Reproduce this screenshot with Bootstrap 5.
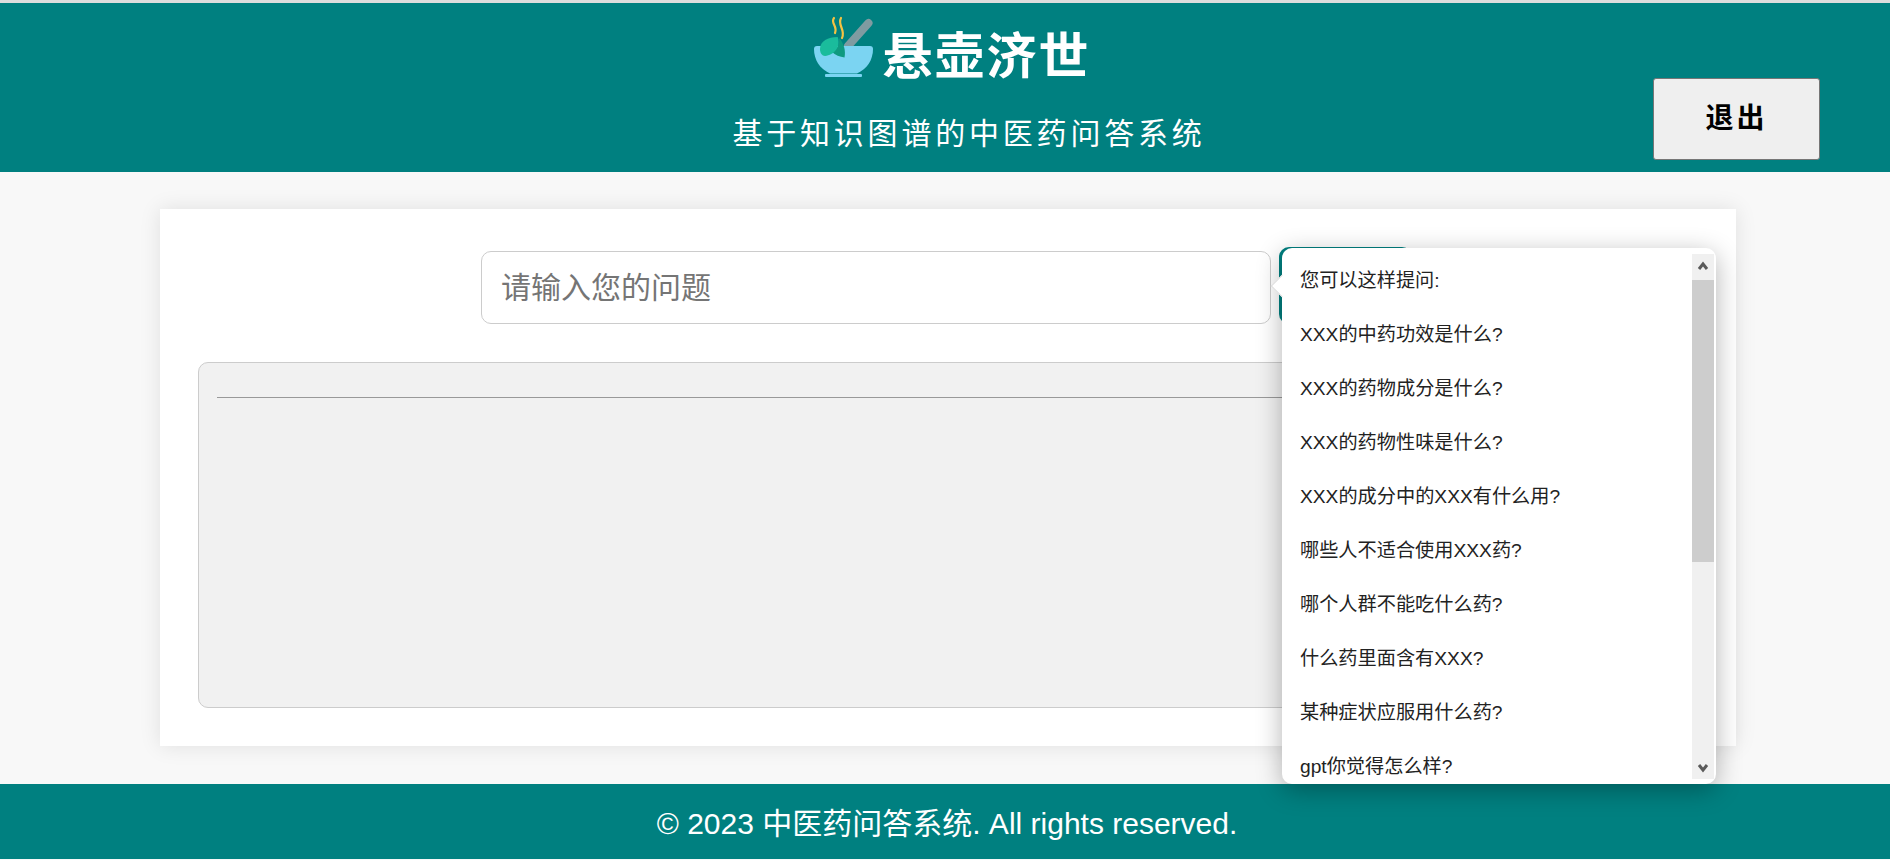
<!DOCTYPE html>
<html lang="zh">
<head>
<meta charset="utf-8">
<title>悬壶济世</title>
<link href="https://cdn.jsdelivr.net/npm/bootstrap@5.3.0/dist/css/bootstrap.min.css" rel="stylesheet">
<style>
html,body{height:860px;overflow:hidden}
body{background:#f8f8f8;font-family:"Liberation Sans","Noto Sans CJK SC",sans-serif;color:#222;display:flex;flex-direction:column}
.top-strip{height:3px;background:#ddd;flex:none}
.site-head{height:169px;background:#008080;color:#fff;position:relative;flex:none}
.brand-line{height:88px;padding-top:13px;padding-left:14px}
.brand-name{font-size:50px;font-weight:700;line-height:58px;letter-spacing:2px;margin:12px 0 0 9px}
.brand-sub{font-size:30px;line-height:40px;letter-spacing:3.8px;margin-top:23px;padding-left:48px}
.logout-btn{position:absolute;left:1653px;top:75px;width:167px;height:82px;background:#efefef;border:1px solid #767676;border-radius:3px;color:#000;font-size:28px;font-weight:700;letter-spacing:3px;padding:0}
.main-zone{flex:1;position:relative}
.panel{position:absolute;left:160px;top:37px;width:1576px;height:537px;background:#fff;box-shadow:0 0 20px rgba(0,0,0,.1);padding:42px 38px 37px}
.ask-row{height:73px;margin-left:283px}
.ask-input{width:790px;height:73px;border:1px solid #ccc;border-radius:10px;font-size:30px;padding:0 19px;color:#757575;line-height:71px;background:#fff}
.ask-btn{width:133px;height:77px;margin:-4px 0 0 8px;background:#008080;border:0;border-radius:10px;flex:none}
.answer-box{height:346px;margin-top:38px;background:#f1f1f1;border:1px solid #ccc;border-radius:10px;padding:34px 18px 0}
.answer-rule{border:0;border-top:1px solid #999;opacity:1;margin:0}
.site-foot{height:75px;background:#008080;color:#fff;font-size:30px;flex:none;position:relative;margin-bottom:1px;text-align:center;line-height:80px;padding-left:4px}
.hint-pop{position:absolute;left:1282px;top:248px;width:434px;height:536px;background:#fff;border-radius:10px;box-shadow:0 6px 26px rgba(0,0,0,.3);z-index:5;padding:6px 2px 5px 0}
.hint-pop::before{content:"";position:absolute;left:-8px;top:30px;width:16px;height:16px;background:#fff;transform:rotate(45deg);border-left:1px solid #ddd;border-bottom:1px solid #ddd}
.hint-list{flex:1;overflow:hidden;padding:12px 0 0 18px;position:relative;z-index:1}
.hint-list p{font-size:19.2px;line-height:30px;margin:0 0 24px;color:#222;white-space:nowrap}
.fake-bar{width:22px;background:#f0f0f0;flex:none;position:relative;z-index:1}
.bar-end{height:20px;flex:none}
.bar-thumb{height:282px;background:#cdcdcd;flex:none;margin-top:6px}
.bar-end svg{display:block}
</style>
</head>
<body>
<div class="top-strip"></div>
<header class="site-head">
  <div class="text-center">
    <div class="brand-line d-flex justify-content-center align-items-start">
      <svg width="60" height="62" viewBox="0 0 60 62" aria-hidden="true">
        <path d="M34 30 L54.500 7" stroke="#7f9ba1" stroke-width="8" stroke-linecap="round" fill="none"/>
        <path d="M20 2c-4 5 4 8 1 15M27 2c-4 7 5 12 1 20" stroke="#f5c242" stroke-width="2.2" fill="none" stroke-linecap="round"/>
        <path d="M3 30h53c2 0 3 1 3 3 0 11-6 20-16 24.500H16C6 53 0 44 0 33c0-2 1-3 3-3z" fill="#7bd4f2"/>
        <rect x="11" y="58" width="37" height="3" rx="1" fill="#7bd4f2"/>
        <path d="M25 22C30 27 32 35 30.500 41.500 26 41 21 39 18 36 23 33 26 28 25 22z" fill="#0f9a80"/>
        <path d="M23.700 21C14 21 6 25 6 33 6 37 8 40 11 40 20 39 27 31 23.700 21z" fill="#1abc9c"/>
      </svg>
      <div class="brand-name">悬壶济世</div>
    </div>
    <div class="brand-sub">基于知识图谱的中医药问答系统</div>
  </div>
  <button class="logout-btn" type="button">退出</button>
</header>
<main class="main-zone">
  <section class="panel">
    <div class="ask-row d-flex">
      <div class="ask-input">请输入您的问题</div>
      <button class="ask-btn" type="button" aria-label="提问"></button>
    </div>
    <div class="answer-box"><hr class="answer-rule"></div>
  </section>
</main>
<footer class="site-foot">© 2023 中医药问答系统. All rights reserved.</footer>
<aside class="hint-pop d-flex">
  <div class="hint-list">
    <p>您可以这样提问:</p>
    <p>XXX的中药功效是什么?</p>
    <p>XXX的药物成分是什么?</p>
    <p>XXX的药物性味是什么?</p>
    <p>XXX的成分中的XXX有什么用?</p>
    <p>哪些人不适合使用XXX药?</p>
    <p>哪个人群不能吃什么药?</p>
    <p>什么药里面含有XXX?</p>
    <p>某种症状应服用什么药?</p>
    <p>gpt你觉得怎么样?</p>
  </div>
  <div class="fake-bar d-flex flex-column">
    <div class="bar-end"><svg width="22" height="20" viewBox="0 0 22 20"><path d="M7 15 L11 10 L15 15" stroke="#5a5a5a" stroke-width="3" fill="none"/></svg></div>
    <div class="bar-thumb"></div>
    <div class="flex-grow-1"></div>
    <div class="bar-end"><svg width="22" height="20" viewBox="0 0 22 20"><path d="M7 6 L11 11 L15 6" stroke="#5a5a5a" stroke-width="3" fill="none"/></svg></div>
  </div>
</aside>
</body>
</html>
